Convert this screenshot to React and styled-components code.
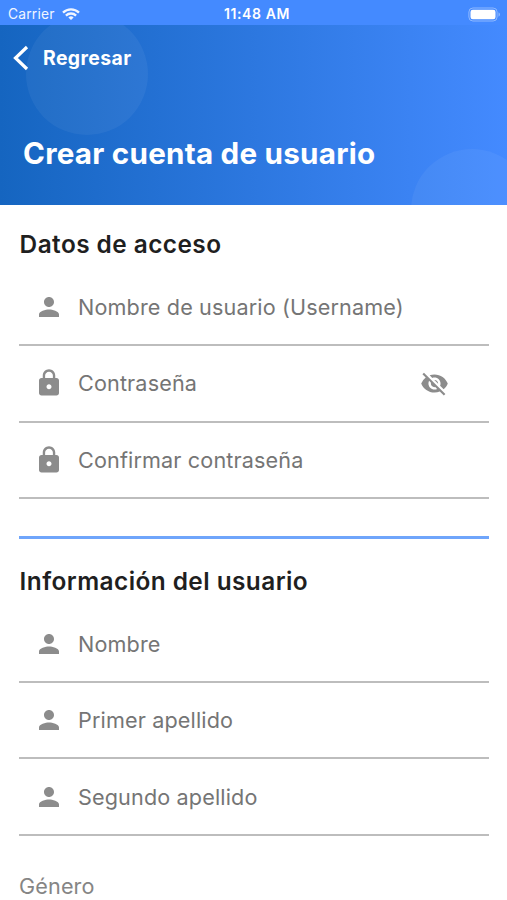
import React, { useState } from "react";
import styled, { createGlobalStyle } from "styled-components";
import { MdPerson, MdLock, MdVisibility, MdVisibilityOff } from "react-icons/md";

const GlobalStyle = createGlobalStyle`
  * {
    box-sizing: border-box;
  }

  body {
    margin: 0;
    background-color: #fff;
    font-family: Inter, "Liberation Sans", sans-serif;
  }
`

const Page = styled.div`
  width: 100%;
  height: 900px;
  overflow: hidden;
`

const StatusBar = styled.div`
  display: grid;
  grid-template-columns: 1fr auto 1fr;
  align-items: center;
  height: 25px;
  padding: 3px 6px 0 8px;
  background-color: #448aff;
  color: #fff;
`

const Carrier = styled.div`
  display: flex;
  align-items: center;
  gap: 7px;
  font-size: 13.8px;
  letter-spacing: 0.2px;
  line-height: 20px;
  opacity: 0.92;
`

const Clock = styled.div`
  font-size: 14px;
  font-weight: 600;
  letter-spacing: 0.6px;
  line-height: 20px;
  padding-left: 5px;
`

const Battery = styled.svg`
  justify-self: end;
  display: block;
`

const Header = styled.header`
  position: relative;
  display: flex;
  flex-direction: column;
  height: 180px;
  padding: 18px 0 0 13px;
  overflow: hidden;
  background: linear-gradient(to right, #1565c0, #448aff);
  color: #fff;
`

const Bubble = styled.div`
  position: absolute;
  left: ${props => props.$left}px;
  top: ${props => props.$top}px;
  width: 122px;
  height: 122px;
  border-radius: 50%;
  background-color: rgba(255, 255, 255, 0.05);
`

const BackButton = styled.button`
  position: relative;
  display: flex;
  align-items: center;
  align-self: flex-start;
  gap: 14px;
  height: 30px;
  padding: 0;
  border: 0;
  background: none;
  color: inherit;
  font-family: inherit;
  font-size: 19.4px;
  font-weight: 700;
  letter-spacing: 0.4px;
`

const Title = styled.h1`
  position: relative;
  margin: 62px 0 0 10px;
  font-size: 29.6px;
  font-weight: 700;
  line-height: 36px;
  letter-spacing: 0.24px;
  white-space: nowrap;
`

const Form = styled.form`
  padding: 22px 18px 0 19px;
`

const SectionTitle = styled.h2`
  margin: 0;
  padding-left: 0.6px;
  font-size: 24.4px;
  font-weight: 600;
  line-height: 34px;
  letter-spacing: 0.44px;
  color: #1f1f1f;
`

const Fields = styled.div`
  margin-top: 9px;
`

const FieldRow = styled.label`
  display: flex;
  align-items: center;
  height: 76.3px;
  padding: 0 40px 0 15px;
  border-bottom: 2px solid #bdbdbd;
  color: #8c8c8c;
`

const FieldLabel = styled.span`
  flex: 1;
  margin-left: 14px;
  font-size: 21.6px;
  letter-spacing: 0.14px;
  line-height: 30px;
  color: #757575;
`

const ToggleButton = styled.button`
  display: flex;
  padding: 0;
  border: 0;
  background: none;
  color: inherit;
`

const Divider = styled.hr`
  height: 3px;
  margin: 37px 0 25px;
  border: 0;
  background-color: #6fa5fb;
`

const SelectLabel = styled.div`
  margin-top: 35px;
  font-size: 21.6px;
  line-height: 30px;
  letter-spacing: 0.14px;
  color: #858585;
`

function WifiIcon() {
  return (
    <svg width="18" height="13" viewBox="0 0 18 13" fill="none" stroke="#fff" strokeWidth="2.3">
      <path d="M1 4.6a11.4 11.4 0 0 1 16 0" />
      <path d="M3.9 7.6a7.3 7.3 0 0 1 10.2 0" />
      <path d="M6.4 9.4a3.8 3.8 0 0 1 5.2 0L9 12.1z" fill="#fff" stroke="none" />
    </svg>
  )
}

function Field({ icon: Icon, label, children }) {
  return (
    <FieldRow>
      <Icon size={30} />
      <FieldLabel>{label}</FieldLabel>
      {children}
    </FieldRow>
  )
}

function App() {
  const [isHidden, setIsHidden] = useState(true);

  const handleToggle = () => {
    setIsHidden(!isHidden);
  }

  return (
    <Page>
      <GlobalStyle />
      <StatusBar>
        <Carrier>
          Carrier
          <WifiIcon />
        </Carrier>
        <Clock>11:48 AM</Clock>
        <Battery width="33" height="15" viewBox="0 0 33 15">
          <rect x="0.9" y="1" width="28.2" height="13" rx="4" fill="none" stroke="#fff" strokeOpacity="0.4" />
          <rect x="2.5" y="2.7" width="25" height="9.6" rx="2.3" fill="#fff" />
          <path d="M30.5 5.3c2 .8 2 3.6 0 4.4z" fill="#fff" fillOpacity="0.4" />
        </Battery>
      </StatusBar>
      <Header>
        <Bubble $left={26} $top={-12} />
        <Bubble $left={411} $top={124} />
        <BackButton type="button">
          <svg width="16" height="26" viewBox="0 0 16 26" fill="none" stroke="#fff" strokeWidth="3.2">
            <path d="M14 2 2.5 13 14 24" />
          </svg>
          Regresar
        </BackButton>
        <Title>Crear cuenta de usuario</Title>
      </Header>
      <Form>
        <SectionTitle>Datos de acceso</SectionTitle>
        <Fields>
          <Field icon={MdPerson} label="Nombre de usuario (Username)" />
          <Field icon={MdLock} label="Contraseña">
            <ToggleButton type="button" onClick={handleToggle}>
              {isHidden ? <MdVisibilityOff size={29} /> : <MdVisibility size={29} />}
            </ToggleButton>
          </Field>
          <Field icon={MdLock} label="Confirmar contraseña" />
        </Fields>
        <Divider />
        <SectionTitle>Información del usuario</SectionTitle>
        <Fields>
          <Field icon={MdPerson} label="Nombre" />
          <Field icon={MdPerson} label="Primer apellido" />
          <Field icon={MdPerson} label="Segundo apellido" />
        </Fields>
        <SelectLabel>Género</SelectLabel>
      </Form>
    </Page>
  )
}

export default App;
